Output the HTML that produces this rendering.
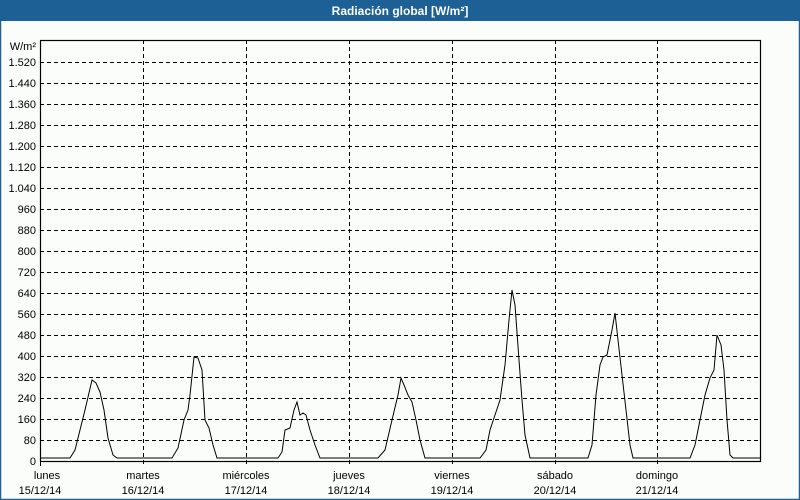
<!DOCTYPE html>
<html><head><meta charset="utf-8"><style>
body{margin:0;width:800px;height:500px;overflow:hidden;background:#fbfdfb;font-family:"Liberation Sans",sans-serif}
</style></head><body>
<svg width="800" height="500" xmlns="http://www.w3.org/2000/svg" style="display:block">
<rect x="0" y="0" width="800" height="500" fill="#fbfdfb"/>
<rect x="0" y="0" width="800" height="21" fill="#1c6096"/>
<rect x="0.5" y="20" width="799" height="479.5" fill="none" stroke="#1c6096" stroke-width="1.5"/>
<text x="400" y="15" text-anchor="middle" fill="#fff" font-size="12" font-weight="bold" font-family="Liberation Sans, sans-serif">Radiación global [W/m²]</text>
<g stroke="#000" stroke-dasharray="4,3" stroke-width="1">
<line x1="40" x2="760" y1="62.5" y2="62.5"/><line x1="40" x2="760" y1="83.5" y2="83.5"/><line x1="40" x2="760" y1="104.5" y2="104.5"/><line x1="40" x2="760" y1="125.5" y2="125.5"/><line x1="40" x2="760" y1="146.5" y2="146.5"/><line x1="40" x2="760" y1="167.5" y2="167.5"/><line x1="40" x2="760" y1="188.5" y2="188.5"/><line x1="40" x2="760" y1="209.5" y2="209.5"/><line x1="40" x2="760" y1="230.5" y2="230.5"/><line x1="40" x2="760" y1="251.5" y2="251.5"/><line x1="40" x2="760" y1="272.5" y2="272.5"/><line x1="40" x2="760" y1="293.5" y2="293.5"/><line x1="40" x2="760" y1="314.5" y2="314.5"/><line x1="40" x2="760" y1="335.5" y2="335.5"/><line x1="40" x2="760" y1="356.5" y2="356.5"/><line x1="40" x2="760" y1="377.5" y2="377.5"/><line x1="40" x2="760" y1="398.5" y2="398.5"/><line x1="40" x2="760" y1="419.5" y2="419.5"/><line x1="40" x2="760" y1="440.5" y2="440.5"/>
<line x1="143.5" x2="143.5" y1="40" y2="466"/><line x1="246.5" x2="246.5" y1="40" y2="466"/><line x1="349.5" x2="349.5" y1="40" y2="466"/><line x1="452.5" x2="452.5" y1="40" y2="466"/><line x1="555.5" x2="555.5" y1="40" y2="466"/><line x1="657.5" x2="657.5" y1="40" y2="466"/>
</g>
<rect x="40.5" y="40.5" width="720" height="421" fill="none" stroke="#000" stroke-width="1.2"/>
<line x1="40.5" x2="40.5" y1="461" y2="466" stroke="#000"/>
<polyline fill="none" stroke="#000" stroke-width="1" points="40,458 70,458 75,450 80,430 85,410 92,380 96,383 100,392 104,410 108,438 113,455 117,458 172,458 178,448 184,420 188,410 190,395 194,357 198,358 202,370 205,420 209,428 213,445 217,458 278,458 282,452 285,430 290,428 294,410 297,402 300,415 303,413 306,415 310,430 315,445 320,458 378,458 385,450 392,420 398,395 401,378 404,385 408,395 412,402 416,420 420,440 425,458 480,458 486,450 490,430 495,415 500,400 505,365 509,320 512,290 515,305 519,360 522,400 525,435 530,458 588,458 592,445 596,395 600,365 603,357 607,355 612,330 615,313 618,340 622,375 626,410 630,445 633,458 690,458 695,445 700,420 705,395 710,378 714,370 717,335 721,345 724,370 727,420 730,455 733,458 760,458"/>
<g font-size="11" fill="#000" text-anchor="end" font-family="Liberation Sans, sans-serif">
<text x="36" y="50" >W/m²</text>
<text x="36" y="66">1.520</text><text x="36" y="87">1.440</text><text x="36" y="108">1.360</text><text x="36" y="129">1.280</text><text x="36" y="150">1.200</text><text x="36" y="171">1.120</text><text x="36" y="192">1.040</text><text x="36" y="213">960</text><text x="36" y="234">880</text><text x="36" y="255">800</text><text x="36" y="276">720</text><text x="36" y="297">640</text><text x="36" y="318">560</text><text x="36" y="339">480</text><text x="36" y="360">400</text><text x="36" y="381">320</text><text x="36" y="402">240</text><text x="36" y="423">160</text><text x="36" y="444">80</text><text x="36" y="465">0</text>
</g>
<g font-size="11" fill="#000" text-anchor="middle" font-family="Liberation Sans, sans-serif">
<text x="47" y="479">lunes</text><text x="40" y="494">15/12/14</text>
<text x="143" y="479">martes</text><text x="143" y="494">16/12/14</text>
<text x="246" y="479">miércoles</text><text x="246" y="494">17/12/14</text>
<text x="349" y="479">jueves</text><text x="349" y="494">18/12/14</text>
<text x="452" y="479">viernes</text><text x="452" y="494">19/12/14</text>
<text x="555" y="479">sábado</text><text x="555" y="494">20/12/14</text>
<text x="657" y="479">domingo</text><text x="657" y="494">21/12/14</text>
</g>
</svg>
</body></html>
